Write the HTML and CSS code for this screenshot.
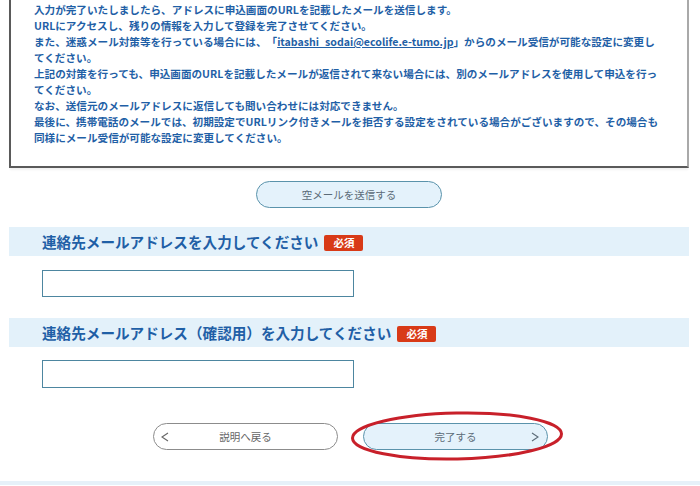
FILE: index.html
```html
<!DOCTYPE html>
<html lang="ja">
<head>
<meta charset="utf-8">
<title>連絡先メールアドレス入力</title>
<link rel="stylesheet" href="styles.css">
</head>
<body>
<div class="page">
  <div class="notice">
    <p>入力が完了いたしましたら、アドレスに申込画面のURLを記載したメールを送信します。</p>
    <p>URLにアクセスし、残りの情報を入力して登録を完了させてください。</p>
    <p>また、迷惑メール対策等を行っている場合には、「<a class="mail-link" href="#">itabashi_sodai@ecolife.e-tumo.jp</a>」からのメール受信が可能な設定に変更してください。</p>
    <p>上記の対策を行っても、申込画面のURLを記載したメールが返信されて来ない場合には、別のメールアドレスを使用して申込を行ってください。</p>
    <p>なお、送信元のメールアドレスに返信しても問い合わせには対応できません。</p>
    <p>最後に、携帯電話のメールでは、初期設定でURLリンク付きメールを拒否する設定をされている場合がございますので、その場合も同様にメール受信が可能な設定に変更してください。</p>
  </div>

  <div class="send-row">
    <button class="pill pill-blue send-btn" type="button">空メールを送信する</button>
  </div>

  <div class="field-head first">
    <span class="field-title">連絡先メールアドレスを入力してください</span>
    <span class="badge">必須</span>
  </div>
  <div class="field-body">
    <input class="text-input" type="text">
  </div>

  <div class="field-head second">
    <span class="field-title">連絡先メールアドレス（確認用）を入力してください</span>
    <span class="badge">必須</span>
  </div>
  <div class="field-body">
    <input class="text-input tall" type="text">
  </div>

  <div class="nav-row">
    <button class="pill pill-white nav-btn" type="button">
      <svg class="chev chev-left" width="8" height="10" viewBox="0 0 8 10"><polyline points="7,1 1,5 7,9" fill="none" stroke="#666" stroke-width="1.1"/></svg>
      <span>説明へ戻る</span>
    </button>
    <div class="done-wrap">
      <button class="pill pill-blue nav-btn" type="button">
        <span>完了する</span>
        <svg class="chev chev-right" width="8" height="10" viewBox="0 0 8 10"><polyline points="1,1 7,5 1,9" fill="none" stroke="#5b6b78" stroke-width="1.1"/></svg>
      </button>
      <svg class="circle-mark" width="220" height="56" viewBox="0 0 220 56">
        <ellipse cx="108" cy="27" rx="104.5" ry="23" fill="none" stroke="#c8202a" stroke-width="3" transform="rotate(-1.2 108 27)"/>
      </svg>
    </div>
  </div>
</div>
<div class="bottom-band"></div>
</body>
</html>
```

FILE: styles.css
```css
html, body {
  margin: 0;
  padding: 0;
  background: #ffffff;
  overflow: hidden;
}

body {
  font-family: "Noto Sans CJK JP", "Noto Sans", sans-serif;
  text-spacing-trim: space-all;
}

.page {
  width: 680px;
  margin-left: 9px;
}

.notice {
  border-left: 2px solid #5a5a5a;
  border-right: 2px solid #a9a9a9;
  border-bottom: 2px solid #5a5a5a;
  padding: 2px 24px 20px 23px;
  color: #1f5fa6;
  font-weight: 700;
  font-size: 10.6px;
  line-height: 16px;
  box-shadow: 0 3px 2px -1px rgba(0, 0, 0, 0.06);
}

.notice p {
  margin: 0;
}

.mail-link {
  color: #1f5fa6;
  text-decoration: underline;
}

.send-row {
  display: flex;
  justify-content: center;
  margin-top: 13px;
}

.pill {
  box-sizing: border-box;
  height: 27px;
  border-radius: 14px;
  font-family: "Noto Sans CJK JP", "Noto Sans", sans-serif;
  font-size: 10.5px;
  font-weight: 400;
  padding: 0;
  display: flex;
  align-items: center;
  justify-content: center;
  position: relative;
}

.pill-blue {
  background: #e4f2fb;
  border: 1px solid #5a93ab;
  color: #5b6b78;
}

.pill-white {
  background: #ffffff;
  border: 1px solid #8c8c8c;
  color: #666666;
}

.send-btn {
  width: 186px;
}

.field-head {
  box-sizing: border-box;
  height: 29px;
  background: #e3f1fa;
  display: flex;
  align-items: center;
  padding-left: 33px;
}

.field-head.first {
  margin-top: 19px;
}

.field-head.second {
  margin-top: 21px;
}

.field-title {
  color: #1f5fa6;
  font-weight: 700;
  font-size: 14.6px;
  line-height: 20px;
}

.badge {
  margin-left: 6px;
  margin-top: 3px;
  background: #d83a17;
  color: #ffffff;
  font-weight: 700;
  font-size: 10.5px;
  line-height: 16px;
  height: 16px;
  padding: 0 9px;
  border-radius: 2px;
}

.field-body {
  padding-left: 33px;
  margin-top: 14px;
}

.field-head.second + .field-body {
  margin-top: 13px;
}

.text-input {
  display: block;
  box-sizing: border-box;
  width: 312px;
  height: 27px;
  margin: 0;
  border: 1px solid #4d86a0;
  border-radius: 0;
  background: #ffffff;
}

.text-input.tall {
  height: 28px;
}

.nav-row {
  display: flex;
  justify-content: center;
  gap: 25px;
  margin-top: 35px;
  padding-left: 3px;
}

.nav-btn {
  width: 185px;
}

.chev {
  position: absolute;
  top: 8px;
}

.chev-left {
  left: 7px;
}

.chev-right {
  right: 8px;
}

.done-wrap {
  position: relative;
}

.circle-mark {
  position: absolute;
  left: -14px;
  top: -14px;
  pointer-events: none;
}

.bottom-band {
  margin-top: 31px;
  height: 4px;
  background: #e6f1f9;
}
```
